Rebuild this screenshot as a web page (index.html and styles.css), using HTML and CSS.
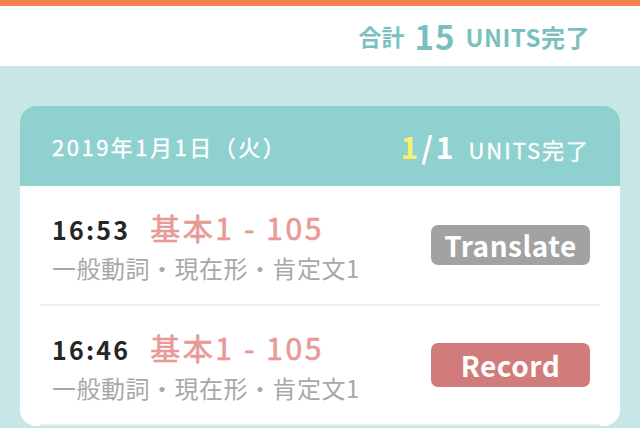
FILE: index.html
```html
<!DOCTYPE html>
<html lang="ja">
<head>
    <meta charset="UTF-8">
    <title>学習履歴</title>
    <link rel="stylesheet" href="styles.css">
</head>
<body>
    <div class="top-bar"></div>

    <header class="summary">
        <span class="summary-label">合計</span>
        <span class="summary-count">15</span>
        <span class="summary-unit">UNITS完了</span>
    </header>

    <main class="history">
        <section class="day-card">
            <div class="day-head">
                <span class="day-date">2019年1月1日（火）</span>
                <span class="day-progress"><b class="done">1</b><b>/1</b><span class="day-unit">UNITS完了</span></span>
            </div>
            <ul class="lesson-list">
                <li class="lesson">
                    <div class="lesson-info">
                        <p class="lesson-title"><span class="lesson-time">16:53</span>基本1 - 105</p>
                        <p class="lesson-sub">一般動詞・現在形・肯定文1</p>
                    </div>
                    <span class="btn btn-translate">Translate</span>
                </li>
                <li class="lesson">
                    <div class="lesson-info">
                        <p class="lesson-title"><span class="lesson-time">16:46</span>基本1 - 105</p>
                        <p class="lesson-sub">一般動詞・現在形・肯定文1</p>
                    </div>
                    <span class="btn btn-record">Record</span>
                </li>
            </ul>
        </section>
    </main>
</body>
</html>
```

FILE: styles.css
```css
body {
    margin: 0;
    background-color: #c8e6e6;
    font-family: "Noto Sans CJK JP", "Noto Sans", sans-serif;
}
.top-bar {
    height: 6px;
    background-color: #f38350;
}
.summary {
    background-color: white;
    height: 60px;
    display: flex;
    justify-content: flex-end;
    align-items: center;
    gap: 10px;
    padding: 0 50px 0 0;
    color: #7bbfbf;
    font-weight: bold;
}
.summary-label {
    font-size: 23px;
}
.summary-count {
    font-size: 33px;
    line-height: 1;
    letter-spacing: 1px;
}
.summary-unit {
    font-size: 24px;
    letter-spacing: 0.5px;
}
.history {
    padding: 40px 20px;
}
.day-card {
    background-color: white;
    border-radius: 16px;
    overflow: hidden;
}
.day-head {
    background-color: #8fd1cf;
    height: 80px;
    padding: 0 30px 0 32px;
    display: flex;
    justify-content: space-between;
    align-items: center;
    color: white;
    font-size: 22px;
}
.day-date {
    letter-spacing: 2.5px;
    -webkit-text-stroke: 0.4px white;
}
.day-progress b {
    font-size: 30px;
    letter-spacing: 3px;
}
.day-progress .done {
    color: #fbef72;
}
.day-unit {
    margin-left: 12px;
    letter-spacing: 2px;
    -webkit-text-stroke: 0.3px white;
}
.lesson-list {
    list-style: none;
    margin: 0 20px;
    padding: 0;
}
.lesson {
    display: flex;
    justify-content: space-between;
    align-items: center;
    height: 118px;
    padding: 0 10px 0 12px;
    border-bottom: 2px solid #e4f2f2;
}
.lesson-info {
    padding-top: 6px;
}
.lesson p {
    margin: 0;
}
.lesson-title {
    font-size: 30px;
    color: #e89a96;
    line-height: 38px;
    letter-spacing: 2.6px;
    -webkit-text-stroke: 0.7px #e89a96;
}
.lesson-time {
    color: #262626;
    font-size: 25px;
    font-weight: bold;
    letter-spacing: 2.2px;
    margin-right: 20px;
    -webkit-text-stroke: 0;
}
.lesson-sub {
    font-size: 24px;
    color: #a8a8a8;
    line-height: 40px;
    letter-spacing: 0.5px;
}
.btn {
    width: 159px;
    border-radius: 7px;
    color: white;
    font-weight: bold;
    text-align: center;
    font-size: 28px;
    letter-spacing: 0.5px;
}
.btn-translate {
    background-color: #a2a2a2;
    line-height: 40px;
}
.btn-record {
    background-color: #d17b7b;
    line-height: 44px;
}
```
